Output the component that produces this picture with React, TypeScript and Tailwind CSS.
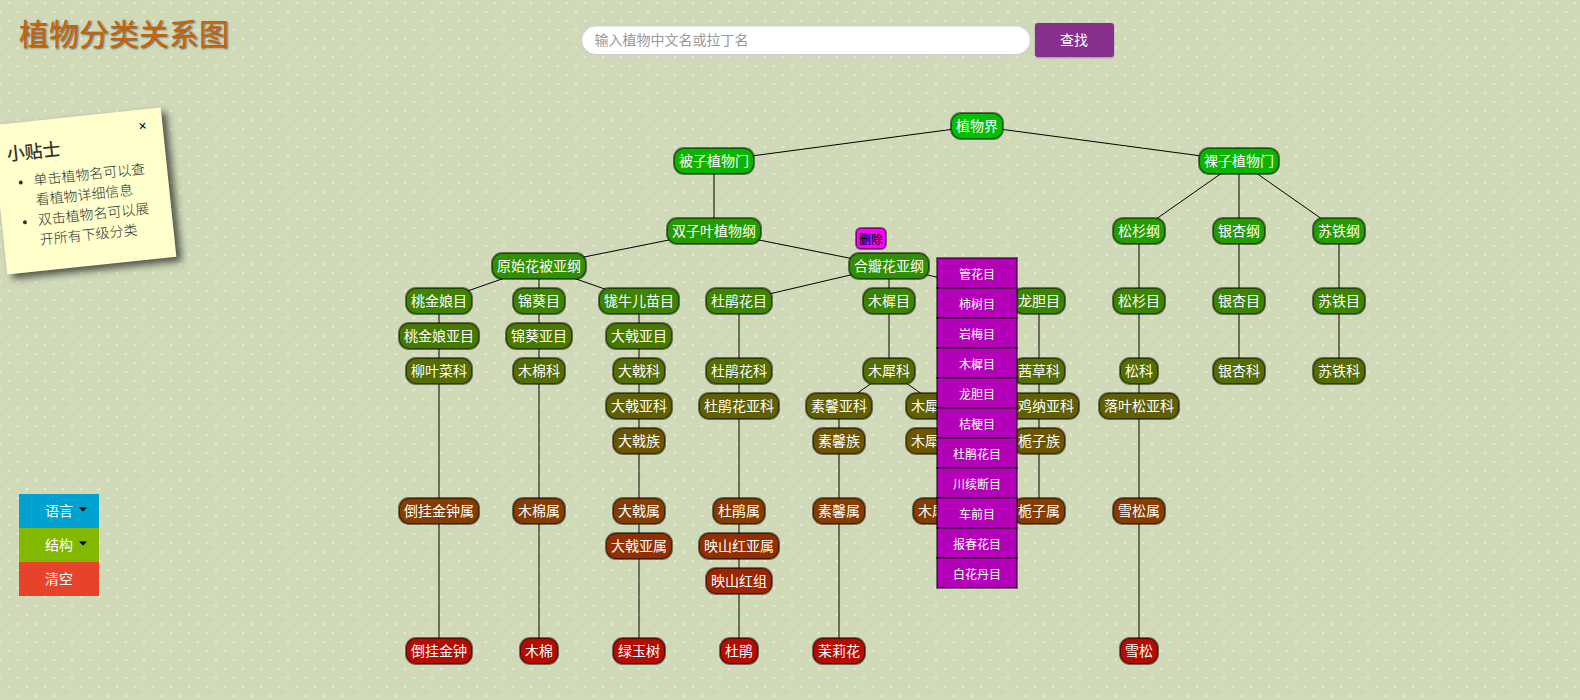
import React from "react";

type TaxonNode = { id: string; label: string; x: number; level: number; parent?: string };

const nodes: TaxonNode[] = [
  { id: "root", label: "植物界", x: 588, level: 0 },
  { id: "angio", label: "被子植物门", x: 325, level: 1, parent: "root" },
  { id: "gymno", label: "裸子植物门", x: 850, level: 1, parent: "root" },
  { id: "dicot", label: "双子叶植物纲", x: 325, level: 3, parent: "angio" },
  { id: "c1", label: "松杉纲", x: 750, level: 3, parent: "gymno" },
  { id: "c2", label: "银杏纲", x: 850, level: 3, parent: "gymno" },
  { id: "c3", label: "苏铁纲", x: 950, level: 3, parent: "gymno" },
  { id: "s1", label: "原始花被亚纲", x: 150, level: 4, parent: "dicot" },
  { id: "s2", label: "合瓣花亚纲", x: 500, level: 4, parent: "dicot" },
  { id: "o1", label: "桃金娘目", x: 50, level: 5, parent: "s1" },
  { id: "o2", label: "锦葵目", x: 150, level: 5, parent: "s1" },
  { id: "o3", label: "牻牛儿苗目", x: 250, level: 5, parent: "s1" },
  { id: "o4", label: "杜鹃花目", x: 350, level: 5, parent: "s2" },
  { id: "o5", label: "木樨目", x: 500, level: 5, parent: "s2" },
  { id: "o6", label: "龙胆目", x: 650, level: 5, parent: "s2" },
  { id: "o7", label: "松杉目", x: 750, level: 5, parent: "c1" },
  { id: "o8", label: "银杏目", x: 850, level: 5, parent: "c2" },
  { id: "o9", label: "苏铁目", x: 950, level: 5, parent: "c3" },
  { id: "so1", label: "桃金娘亚目", x: 50, level: 6, parent: "o1" },
  { id: "so2", label: "锦葵亚目", x: 150, level: 6, parent: "o2" },
  { id: "so3", label: "大戟亚目", x: 250, level: 6, parent: "o3" },
  { id: "f1", label: "柳叶菜科", x: 50, level: 7, parent: "so1" },
  { id: "f2", label: "木棉科", x: 150, level: 7, parent: "so2" },
  { id: "f3", label: "大戟科", x: 250, level: 7, parent: "so3" },
  { id: "f4", label: "杜鹃花科", x: 350, level: 7, parent: "o4" },
  { id: "f5", label: "木犀科", x: 500, level: 7, parent: "o5" },
  { id: "f6", label: "茜草科", x: 650, level: 7, parent: "o6" },
  { id: "f7", label: "松科", x: 750, level: 7, parent: "o7" },
  { id: "f8", label: "银杏科", x: 850, level: 7, parent: "o8" },
  { id: "f9", label: "苏铁科", x: 950, level: 7, parent: "o9" },
  { id: "sf3", label: "大戟亚科", x: 250, level: 8, parent: "f3" },
  { id: "sf4", label: "杜鹃花亚科", x: 350, level: 8, parent: "f4" },
  { id: "sf5", label: "素馨亚科", x: 450, level: 8, parent: "f5" },
  { id: "sf6", label: "木犀亚科", x: 550, level: 8, parent: "f5" },
  { id: "sf7", label: "金鸡纳亚科", x: 650, level: 8, parent: "f6" },
  { id: "sf8", label: "落叶松亚科", x: 750, level: 8, parent: "f7" },
  { id: "t3", label: "大戟族", x: 250, level: 9, parent: "sf3" },
  { id: "t5", label: "素馨族", x: 450, level: 9, parent: "sf5" },
  { id: "t6", label: "木犀榄族", x: 550, level: 9, parent: "sf6" },
  { id: "t7", label: "栀子族", x: 650, level: 9, parent: "sf7" },
  { id: "g1", label: "倒挂金钟属", x: 50, level: 11, parent: "f1" },
  { id: "g2", label: "木棉属", x: 150, level: 11, parent: "f2" },
  { id: "g3", label: "大戟属", x: 250, level: 11, parent: "t3" },
  { id: "g4", label: "杜鹃属", x: 350, level: 11, parent: "sf4" },
  { id: "g5", label: "素馨属", x: 450, level: 11, parent: "t5" },
  { id: "g6", label: "木犀属", x: 550, level: 11, parent: "t6" },
  { id: "g7", label: "栀子属", x: 650, level: 11, parent: "t7" },
  { id: "g8", label: "雪松属", x: 750, level: 11, parent: "sf8" },
  { id: "sg3", label: "大戟亚属", x: 250, level: 12, parent: "g3" },
  { id: "sg4", label: "映山红亚属", x: 350, level: 12, parent: "g4" },
  { id: "z4", label: "映山红组", x: 350, level: 13, parent: "sg4" },
  { id: "p1", label: "倒挂金钟", x: 50, level: 15, parent: "g1" },
  { id: "p2", label: "木棉", x: 150, level: 15, parent: "g2" },
  { id: "p3", label: "绿玉树", x: 250, level: 15, parent: "sg3" },
  { id: "p4", label: "杜鹃", x: 350, level: 15, parent: "z4" },
  { id: "p5", label: "茉莉花", x: 450, level: 15, parent: "g5" },
  { id: "p8", label: "雪松", x: 750, level: 15, parent: "g8" },
];

const menuItems = [
  "管花目", "柿树目", "岩梅目", "木樨目", "龙胆目", "桔梗目",
  "杜鹃花目", "川续断目", "车前目", "报春花目", "白花丹目",
];

const NODE_HEIGHT = 26;
const centerY = (level: number) => 26 + level * 35;
const nodeWidth = (label: string) => label.length * 14 + 10;
const levelColor = (level: number) => `rgb(${level * 12}, ${192 - level * 12}, 0)`;
const byId = new Map(nodes.map((n) => [n.id, n]));

function TaxonomyTree() {
  return (
    <div className="relative h-[590px] w-[1000px] shrink-0">
      <svg className="absolute inset-0 h-full w-full" aria-hidden="true">
        {nodes.map((n) => {
          const p = n.parent ? byId.get(n.parent) : undefined;
          if (!p) return null;
          return (
            <line key={n.id} x1={p.x} y1={centerY(p.level)} x2={n.x} y2={centerY(n.level)} stroke="black" strokeWidth="1" />
          );
        })}
      </svg>
      {nodes.map((n) => {
        const w = nodeWidth(n.label);
        return (
          <button
            key={n.id}
            type="button"
            className="absolute flex items-center justify-center rounded-[10px] text-sm leading-none whitespace-nowrap text-white shadow-[inset_0_0_0_1px_rgba(0,0,0,0.5),0_0_0_1px_rgba(0,0,0,0.5)]"
            style={{
              left: n.x - w / 2,
              top: centerY(n.level) - NODE_HEIGHT / 2,
              width: w,
              height: NODE_HEIGHT,
              backgroundColor: levelColor(n.level),
            }}
          >
            {n.label}
          </button>
        );
      })}
      <button
        type="button"
        className="absolute top-[128px] left-[467px] flex h-[21px] w-[30px] items-center justify-center rounded-[5px] bg-[#ff00ff] pt-[2px] text-xs leading-none font-medium text-black shadow-[inset_0_0_0_1px_rgba(0,0,0,0.5),0_0_0_1px_rgba(0,0,0,0.5)]"
      >
        删除
      </button>
      <ul className="absolute top-[158px] left-[548px] w-[80px]">
        {menuItems.map((item) => (
          <li key={item}>
            <button
              type="button"
              className="flex h-[30px] w-full items-center justify-center bg-[#b400b8] pt-1 text-xs leading-none text-white shadow-[inset_0_0_0_1px_rgba(0,0,0,0.5),0_0_0_1px_rgba(0,0,0,0.5)]"
            >
              {item}
            </button>
          </li>
        ))}
      </ul>
    </div>
  );
}

function TipsNote() {
  return (
    <section className="relative -ml-px h-[150px] w-[170px] -rotate-6 bg-[#ffffcc] px-3 pt-[21px] text-[#333333] shadow-[5px_5px_7px_rgba(33,33,33,0.7)]">
      <button type="button" aria-label="关闭" className="absolute top-2 right-3 h-4 w-4 text-sm leading-4 text-black">
        ×
      </button>
      <h2 className="text-lg leading-5 font-medium">小贴士</h2>
      <ul className="mt-2 list-disc pl-6 text-sm leading-5 font-light">
        <li>单击植物名可以查看植物详细信息</li>
        <li>双击植物名可以展开所有下级分类</li>
      </ul>
    </section>
  );
}

function Caret() {
  return (
    <svg className="absolute top-[13px] right-3 h-[5px] w-2" viewBox="0 0 8 5" aria-hidden="true">
      <path d="M0 0.5H8L4 4.5Z" fill="black" />
    </svg>
  );
}

export default function App() {
  return (
    <div className="min-h-screen bg-[#d0d9b8] bg-[radial-gradient(ellipse_2px_1px_at_center,#e6ecd8_50%,transparent),radial-gradient(ellipse_2px_1px_at_center,#e6ecd8_50%,transparent),radial-gradient(ellipse_4px_1px_at_center,#cdd6b5_50%,transparent),radial-gradient(ellipse_4px_1px_at_center,#cdd6b5_50%,transparent)] bg-[length:18px_18px] bg-[position:-9px_3px,0px_-6px,-6px_8px,3px_-1px] font-['Liberation_Sans','Noto_Sans_CJK_SC',sans-serif]">
      <header className="grid h-[100px] grid-cols-[1fr_auto_1fr] items-start">
        <h1 className="pt-[13px] pl-[19px] text-[30px] leading-[44px] text-[#c86400] [text-shadow:1px_1px_2px_#555566]">植物分类关系图</h1>
        <form className="ml-[114px] flex items-center gap-1 pt-[23px]" onSubmit={(e) => e.preventDefault()}>
          <input
            type="text"
            aria-label="植物名"
            placeholder="输入植物中文名或拉丁名"
            className="h-[30px] w-[450px] rounded-full border border-[#cccccc] bg-white px-[13px] text-sm shadow-[inset_0_1px_1px_rgba(0,0,0,0.08)] placeholder:text-[#999999] focus:outline-none"
          />
          <button type="submit" className="h-[34px] w-[79px] rounded-[3px] bg-[#872f8c] text-sm text-white shadow-[0_1px_2px_rgba(0,0,0,0.3)]">
            查找
          </button>
        </form>
        <span />
      </header>
      <div className="flex">
        <aside className="w-[198px] shrink-0 pt-4">
          <TipsNote />
          <nav className="mt-[228px] ml-[19px] flex w-[80px] flex-col text-sm text-white">
            <button type="button" className="relative h-[34px] bg-[#00a3d0]">
              语言
              <Caret />
            </button>
            <button type="button" className="relative h-[34px] bg-[#82b800]">
              结构
              <Caret />
            </button>
            <button type="button" className="h-[34px] bg-[#e6432a]">清空</button>
          </nav>
        </aside>
        <main className="flex flex-1 justify-center">
          <TaxonomyTree />
        </main>
      </div>
    </div>
  );
}
